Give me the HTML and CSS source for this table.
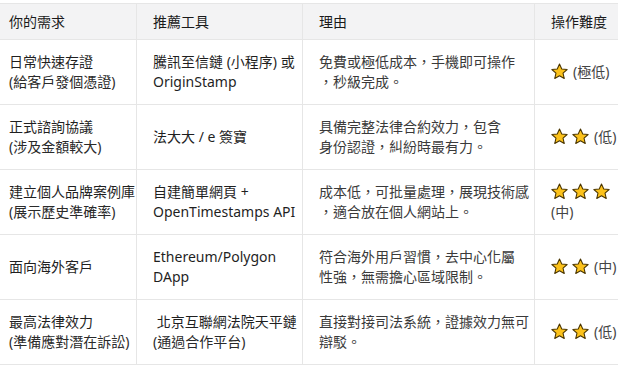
FILE: index.html
```html
<!DOCTYPE html>
<html lang="zh-Hant">
<head>
<meta charset="utf-8">
<link rel="stylesheet" href="styles.css">
</head>
<body>
<svg width="0" height="0" class="defs" aria-hidden="true">
  <defs>
    <symbol id="star" viewBox="0 0 24 24">
      <polygon points="12,1.5 15.2,8.5 22.8,9.2 17,14.3 18.7,21.9 12,17.9 5.3,21.9 7,14.3 1.2,9.2 8.8,8.5" fill="#fcc21b" stroke="#4a3500" stroke-width="1.5" stroke-linejoin="round"/>
    </symbol>
  </defs>
</svg>
<table class="grid">
  <colgroup>
    <col class="c1"><col class="c2"><col class="c3"><col class="c4">
  </colgroup>
  <thead>
    <tr><th>你的需求</th><th>推薦工具</th><th>理由</th><th>操作難度</th></tr>
  </thead>
  <tbody>
    <tr>
      <td>日常快速存證<br><span class="sub">(給客戶發個憑證)</span></td>
      <td>騰訊至信鏈 (小程序) 或<br>OriginStamp</td>
      <td class="why">免費或極低成本，手機即可操作<br>，秒級完成。</td>
      <td class="lvl"><svg class="st"><use href="#star"/></svg><span class="rate">(極低)</span></td>
    </tr>
    <tr>
      <td>正式諮詢協議<br><span class="sub">(涉及金額較大)</span></td>
      <td>法大大 / e 簽寶</td>
      <td class="why">具備完整法律合約效力，包含<br>身份認證，糾紛時最有力。</td>
      <td class="lvl"><svg class="st"><use href="#star"/></svg><svg class="st"><use href="#star"/></svg><span class="rate">(低)</span></td>
    </tr>
    <tr>
      <td>建立個人品牌案例庫<br><span class="sub">(展示歷史準確率)</span></td>
      <td>自建簡單網頁 +<br>OpenTimestamps API</td>
      <td class="why">成本低，可批量處理，展現技術感<br>，適合放在個人網站上。</td>
      <td class="lvl"><svg class="st"><use href="#star"/></svg><svg class="st"><use href="#star"/></svg><svg class="st"><use href="#star"/></svg><br>(中)</td>
    </tr>
    <tr>
      <td>面向海外客戶</td>
      <td>Ethereum/Polygon<br>DApp</td>
      <td class="why">符合海外用戶習慣，去中心化屬<br>性強，無需擔心區域限制。</td>
      <td class="lvl"><svg class="st"><use href="#star"/></svg><svg class="st"><use href="#star"/></svg><span class="rate">(中)</span></td>
    </tr>
    <tr>
      <td>最高法律效力<br><span class="sub">(準備應對潛在訴訟)</span></td>
      <td>&nbsp;北京互聯網法院天平鏈<br><span class="sub">(通過合作平台)</span></td>
      <td class="why">直接對接司法系統，證據效力無可<br>辯駁。</td>
      <td class="lvl"><svg class="st"><use href="#star"/></svg><svg class="st"><use href="#star"/></svg><span class="rate">(低)</span></td>
    </tr>
  </tbody>
</table>
</body>
</html>
```
FILE: styles.css
```css
html, body {
  margin: 0;
  padding: 0;
  background: #ffffff;
  overflow: hidden;
}

.defs {
  position: absolute;
  width: 0;
  height: 0;
}

.grid {
  margin: 3px 0 0 -8px;
  width: 644px;
  table-layout: fixed;
  border-collapse: collapse;
  font-family: "Noto Sans", "Noto Sans CJK TC", sans-serif;
  font-size: 14px;
  line-height: 20px;
  color: #1f1f1f;
}

.c1 { width: 144px; }
.c2 { width: 166px; }
.c3 { width: 232px; }
.c4 { width: 102px; }

.grid th,
.grid td {
  border: 1px solid #e6e6e6;
  padding: 12px 16px;
  text-align: left;
  vertical-align: middle;
  white-space: nowrap;
}

.grid th {
  background: #f3f3f4;
  font-weight: 400;
  padding: 8px 16px 7px;
  color: #1a1a1a;
}

.grid td {
  height: 40px;
}

.sub {
  color: #2a2a2a;
}

.why {
  color: #3a3a3a;
}

.lvl {
  color: #444444;
}

.st {
  width: 17px;
  height: 17px;
  vertical-align: -3px;
  margin-right: 4px;
}

.rate {
  margin-left: 1px;
}
```
